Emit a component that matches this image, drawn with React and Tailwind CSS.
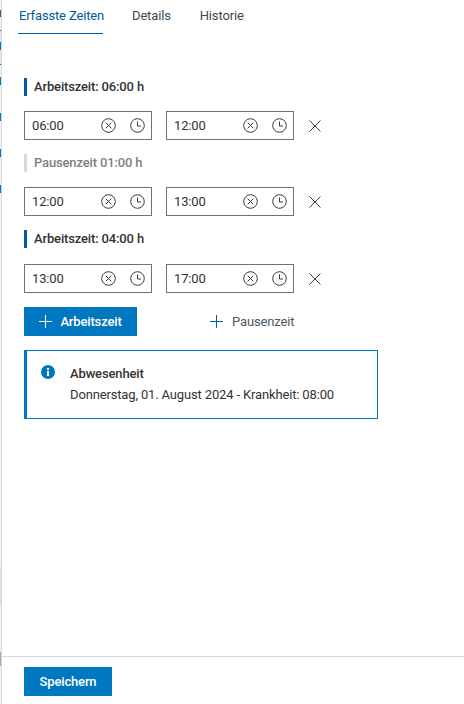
const BLUE = "bg-[#0078c1]";

function ClearIcon() {
  return (
    <svg width="15" height="15" viewBox="0 0 15 15" fill="none" stroke="#3a3a3a" strokeWidth="1">
      <circle cx="7.5" cy="7.5" r="6.8" />
      <path d="M4.7 4.7l5.6 5.6M10.3 4.7l-5.6 5.6" />
    </svg>
  );
}

function ClockIcon() {
  return (
    <svg width="15" height="15" viewBox="0 0 15 15" fill="none" stroke="#3a3a3a" strokeWidth="1">
      <circle cx="7.5" cy="7.5" r="6.8" />
      <path d="M7.5 3.5v4.5h3.5" />
    </svg>
  );
}

function CloseIcon() {
  return (
    <svg width="12" height="12" viewBox="0 0 12 12" fill="none" stroke="#3a3a3a" strokeWidth="1">
      <path d="M.5.5l11 11M11.500.5l-11 11" />
    </svg>
  );
}

function PlusIcon({ color }) {
  return (
    <svg width="13" height="13" viewBox="0 0 13 13" fill="none" stroke={color} strokeWidth="1">
      <path d="M6.500 0v13M0 6.500h13" />
    </svg>
  );
}

function TimeInput({ value }) {
  return (
    <div className="flex h-[29px] w-[128px] items-center border border-[#707070] pl-[7px] pr-[6px]">
      <span className="flex-1 text-[13px] text-[#333]">{value}</span>
      <ClearIcon />
      <span className="ml-[14px] flex"><ClockIcon /></span>
    </div>
  );
}

function TimeRow({ from, to }) {
  return (
    <div className="flex items-center">
      <TimeInput value={from} />
      <span className="ml-[14px]"><TimeInput value={to} /></span>
      <span className="ml-[15px] flex"><CloseIcon /></span>
    </div>
  );
}

function Heading({ muted, children }) {
  return (
    <div className="flex h-[20px] items-center gap-[7px]">
      <span className={`h-[18px] w-[3px] ${muted ? "bg-[#d9d9d9]" : "bg-[#005a9c]"}`} />
      <span className={`text-[13px] font-medium ${muted ? "text-[#808080]" : "text-[#333]"}`}>{children}</span>
    </div>
  );
}

// sliver of the list panel behind this one
function LeftStrip() {
  return (
    <div className="flex h-[704px] w-[1px] flex-col bg-[#f1f1f1]">
      <div className="h-[10px]" />
      <div className="h-[7px] bg-[#555]" />
      <div className="h-[13px]" />
      <div className="h-[1px] bg-[#0078c1]" />
      <div className="h-[11px] bg-[#dde6ee]" />
      <div className="h-[8px] bg-[#0078c1]" />
      <div className="h-[14px] bg-[#dde6ee]" />
      <div className="h-[1px] bg-[#0078c1]" />
      <div className="h-[12px]" />
      <div className="h-[8px] bg-[#0078c1]" />
      <div className="h-[28px]" />
      <div className="h-[8px] bg-[#0078c1]" />
      <div className="h-[28px]" />
      <div className="h-[8px] bg-[#0078c1]" />
      <div className="h-[28px]" />
      <div className="h-[8px] bg-[#0078c1]" />
      <div className="h-[374px]" />
      <div className="h-[38px] bg-[#d6e2ea]" />
      <div className="h-[47px]" />
      <div className="h-[14px] bg-[#a8a8a8]" />
    </div>
  );
}

export default function App() {
  return (
    <div className="flex h-[704px] w-[464px] bg-white font-['Roboto',sans-serif] tracking-[-0.15px]">
      <LeftStrip />
      <div className="flex flex-1 flex-col border-l border-[#d9d9d9]">
        <div className="flex h-[34px] items-start pl-[16px] text-[13px] text-[#3c4a55]">
          <div className="h-[34px] w-[85px] whitespace-nowrap border-b border-[#005a9c] pl-[1px] pt-[8px] leading-[16px] text-[#005a9c]">Erfasste Zeiten</div>
          <div className="ml-[29px] pt-[8px] leading-[16px]">Details</div>
          <div className="ml-[29px] pt-[8px] leading-[16px]">Historie</div>
        </div>

        <div className="flex flex-1 flex-col pl-[22px] pt-[43px]">
          <Heading>Arbeitszeit: 06:00 h</Heading>
          <div className="mt-[14px]"><TimeRow from="06:00" to="12:00" /></div>
          <div className="mt-[13px]"><Heading muted>Pausenzeit 01:00 h</Heading></div>
          <div className="mt-[14px]"><TimeRow from="12:00" to="13:00" /></div>
          <div className="mt-[13px]"><Heading>Arbeitszeit: 04:00 h</Heading></div>
          <div className="mt-[15px]"><TimeRow from="13:00" to="17:00" /></div>

          <div className="mt-[14px] flex items-center">
            <button className={`flex h-[29px] w-[113px] items-center justify-center gap-[8px] ${BLUE} text-[13px] font-medium text-white`}>
              <PlusIcon color="#ffffff" />
              Arbeitszeit
            </button>
            <button className="ml-[73px] flex items-center gap-[9px] text-[13px] text-[#4b5a66]">
              <PlusIcon color="#005a9c" />
              Pausenzeit
            </button>
          </div>

          <div className="mt-[14px] flex h-[69px] w-[354px] border border-l-[3px] border-[#0078c1] pl-[14px] pt-[12px]">
            <svg width="14" height="14" viewBox="0 0 14 14" className="mt-[2px]">
              <circle cx="7" cy="7" r="7" fill="#0078c1" />
              <rect x="6" y="6" width="2" height="5" fill="#fff" />
              <rect x="6" y="3" width="2" height="2" fill="#fff" />
            </svg>
            <div className="ml-[15px] text-[13px] leading-[21px] text-[#333]">
              <div className="font-medium">Abwesenheit</div>
              <div>Donnerstag, 01. August 2024 - Krankheit: 08:00</div>
            </div>
          </div>
        </div>

        <div className="h-[48px] border-t border-[#d9d9d9] pl-[22px] pt-[10px]">
          <button className={`h-[29px] w-[88px] ${BLUE} text-[13px] font-medium text-white`}>Speichern</button>
        </div>
      </div>
    </div>
  );
}
